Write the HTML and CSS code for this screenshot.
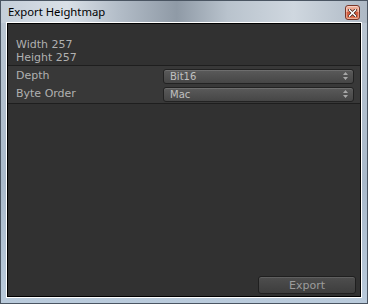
FILE: index.html
```html
<!DOCTYPE html>
<html lang="en">
<head>
    <meta charset="UTF-8">
    <meta name="viewport" content="width=device-width, initial-scale=1.0">
    <title>Export Heightmap</title>
    <link rel="stylesheet" href="styles.css">
</head>
<body>
    <div class="window">
        <div class="titlebar">
            <span class="title">Export Heightmap</span>
            <button class="close-button" title="Close">
                <svg width="9" height="8" viewBox="0 0 9 8">
                    <path d="M1.5 1 L7.5 7 M7.5 1 L1.5 7" stroke="#3a1a14" stroke-width="3" stroke-linecap="square"/>
                    <path d="M1.5 1 L7.5 7 M7.5 1 L1.5 7" stroke="#fff" stroke-width="1.6" stroke-linecap="square"/>
                </svg>
            </button>
        </div>

        <div class="client">
            <div class="info">
                <div>Width 257</div>
                <div>Height 257</div>
            </div>

            <div class="fields">
                <div class="field-row">
                    <label class="field-label">Depth</label>
                    <div class="popup">
                        <span>Bit16</span>
                        <svg class="popup-arrows" width="5" height="8" viewBox="0 0 5 8">
                            <path d="M2.5 0 L5 3 L0 3 Z M2.5 8 L5 5 L0 5 Z" fill="#a8a8a8"/>
                        </svg>
                    </div>
                </div>
                <div class="field-row">
                    <label class="field-label">Byte Order</label>
                    <div class="popup">
                        <span>Mac</span>
                        <svg class="popup-arrows" width="5" height="8" viewBox="0 0 5 8">
                            <path d="M2.5 0 L5 3 L0 3 Z M2.5 8 L5 5 L0 5 Z" fill="#a8a8a8"/>
                        </svg>
                    </div>
                </div>
            </div>

            <div class="spacer"></div>

            <div class="footer">
                <button class="export-button">Export</button>
            </div>
        </div>
    </div>
</body>
</html>
```

FILE: styles.css
```css
body {
    margin: 0;
    font-family: 'DejaVu Sans', Verdana, sans-serif;
    background-color: #fff;
}

.window {
    width: 368px;
    height: 304px;
    box-sizing: border-box;
    border: 1px solid #4a5562;
    padding: 0 6px 6px 6px;
    display: flex;
    flex-direction: column;
    background:
        linear-gradient(to right, #c4ced8 0%, #d9e0e7 18%, #b3bdc8 32%, #8f9aa6 48%, #b9c3cd 62%, #cfd7df 80%, #aeb9c5 100%) top / 100% 22px no-repeat,
        linear-gradient(to bottom, #bcc7d2, #a9b9ca 60%, #b9cadb);
}

.titlebar {
    height: 21px;
    display: flex;
    align-items: flex-start;
    justify-content: space-between;
    padding-left: 1px;
    margin-bottom: 1px;
}

.title {
    font-family: 'Noto Sans', 'DejaVu Sans', sans-serif;
    font-size: 11.3px;
    line-height: 22px;
    color: #000;
}

.close-button {
    width: 15px;
    height: 15px;
    margin-top: 4px;
    margin-right: 1px;
    padding: 0;
    border: 1px solid #7a3628;
    border-radius: 3px;
    background: linear-gradient(to bottom, #f2b9a6 0%, #e99479 45%, #d45a3c 50%, #dc6848 80%, #ea8b68 100%);
    display: flex;
    align-items: center;
    justify-content: center;
    box-shadow: inset 0 0 0 1px rgba(255, 255, 255, 0.35);
}

.client {
    flex: 1;
    display: flex;
    flex-direction: column;
    border: 1px solid #000;
    box-shadow: 0 0 0 1px #fff;
    background-color: #313131;
    color: #b0b0b0;
    font-size: 11px;
}

.info {
    padding: 14px 8px 1px 8px;
    line-height: 13px;
    border-bottom: 1px solid #1e1e1e;
}

.fields {
    padding: 2px 0 1px 0;
    background-color: #383838;
    border-bottom: 1px solid #1e1e1e;
}

.field-row {
    height: 16px;
    display: flex;
    align-items: center;
    margin-bottom: 2px;
}

.field-row:last-child {
    margin-bottom: 0;
}

.field-label {
    width: 155px;
    box-sizing: border-box;
    padding-left: 8px;
    line-height: 16px;
}

.popup {
    width: 191px;
    height: 15px;
    box-sizing: border-box;
    border: 1px solid #222;
    border-radius: 3px;
    background: linear-gradient(to bottom, #5a5a5a, #464646);
    box-shadow: inset 0 1px 0 rgba(255, 255, 255, 0.12);
    display: flex;
    align-items: center;
    justify-content: space-between;
    padding: 0 5px 0 6px;
    font-size: 10px;
    color: #c0c0c0;
}

.spacer {
    flex: 1;
}

.footer {
    display: flex;
    justify-content: flex-end;
    padding: 0 4px 2px 0;
}

.export-button {
    width: 98px;
    height: 18px;
    border: 1px solid #1f1f1f;
    border-radius: 3px;
    background: linear-gradient(to bottom, #4e4e4e, #3d3d3d);
    box-shadow: inset 0 1px 0 rgba(255, 255, 255, 0.1);
    font-family: 'DejaVu Sans', Verdana, sans-serif;
    font-size: 11px;
    color: #9c9c9c;
    padding: 0;
}
```
